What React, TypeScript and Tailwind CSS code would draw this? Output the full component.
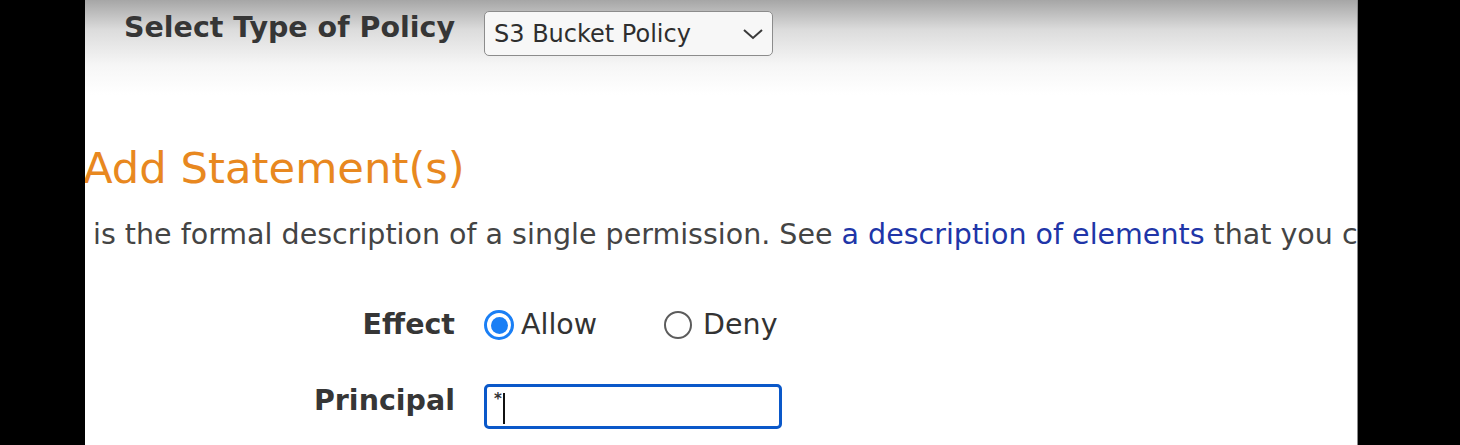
import React from "react";

const font = { fontFamily: '"DejaVu Sans", Verdana, sans-serif' };

function Label({ children }: { children: React.ReactNode }) {
  return (
    <div className="w-[370px] shrink-0 text-right font-bold text-[28.5px] leading-[34px] text-[#363636]">
      {children}
    </div>
  );
}

export default function App() {
  return (
    <div className="flex h-[445px] w-[1460px] overflow-hidden bg-black" style={font}>
      <div className="w-[85px] shrink-0 bg-black" />
      <main className="w-[1273px] shrink-0 overflow-hidden border-r border-[#8a8a8a] bg-[linear-gradient(to_bottom,#a6a6a6_0px,#dcdcdc_30px,#f6f6f6_65px,#ffffff_95px)]">
        {/* policy type */}
        <div className="flex items-start gap-[29px] pt-[11px]">
          <Label>Select Type of Policy</Label>
          <div className="flex h-[45px] w-[289px] items-center justify-between rounded-[5px] border border-[#8c8c8c] bg-[#f7f7f7] pl-[9px] pr-[8px] text-[24px] text-[#2e2e2e]">
            <span>S3 Bucket Policy</span>
            <svg width="22" height="14" viewBox="0 0 22 14" fill="none">
              <path d="M2 3l9 8 9-8" stroke="#3a3a3a" strokeWidth="2" />
            </svg>
          </div>
        </div>

        <h2 className="mt-[91px] -ml-[2px] text-[43.3px] leading-none text-[#e8881f]">Add Statement(s)</h2>

        <p className="mt-[28px] whitespace-nowrap pl-[8px] text-[28.5px] leading-[34px] text-[#444444]">
          is the formal description of a single permission. See{" "}
          <a className="text-[#2035a8]">a description of elements</a> that you can use in statements.
        </p>

        {/* effect */}
        <div className="mt-[56px] flex items-center gap-[29px]">
          <Label>Effect</Label>
          <div className="flex items-center text-[28.5px] leading-[34px] text-[#333333]">
            <span className="flex h-[30px] w-[30px] items-center justify-center rounded-full border-[3px] border-[#1a7ff5] bg-white">
              <span className="h-[17px] w-[17px] rounded-full bg-[#1a7ff5]" />
            </span>
            <span className="ml-[7px]">Allow</span>
            <span className="ml-[67px] h-[28px] w-[28px] rounded-full border-2 border-[#5c5c5c] bg-white" />
            <span className="ml-[11px]">Deny</span>
          </div>
        </div>

        {/* principal */}
        <div className="mt-[42px] flex items-start gap-[29px]">
          <Label>Principal</Label>
          <div className="flex h-[45px] w-[298px] items-start rounded-[5px] border-[3px] border-[#0a58c9] bg-white pl-[7px] pt-[3px] text-[#333]">
            <span className="text-[15px] font-bold leading-[18px]">*</span>
            <span className="ml-[1px] mt-[3px] h-[31px] w-[2px] bg-[#111]" />
          </div>
        </div>
      </main>
      <div className="flex-1 bg-black" />
    </div>
  );
}
